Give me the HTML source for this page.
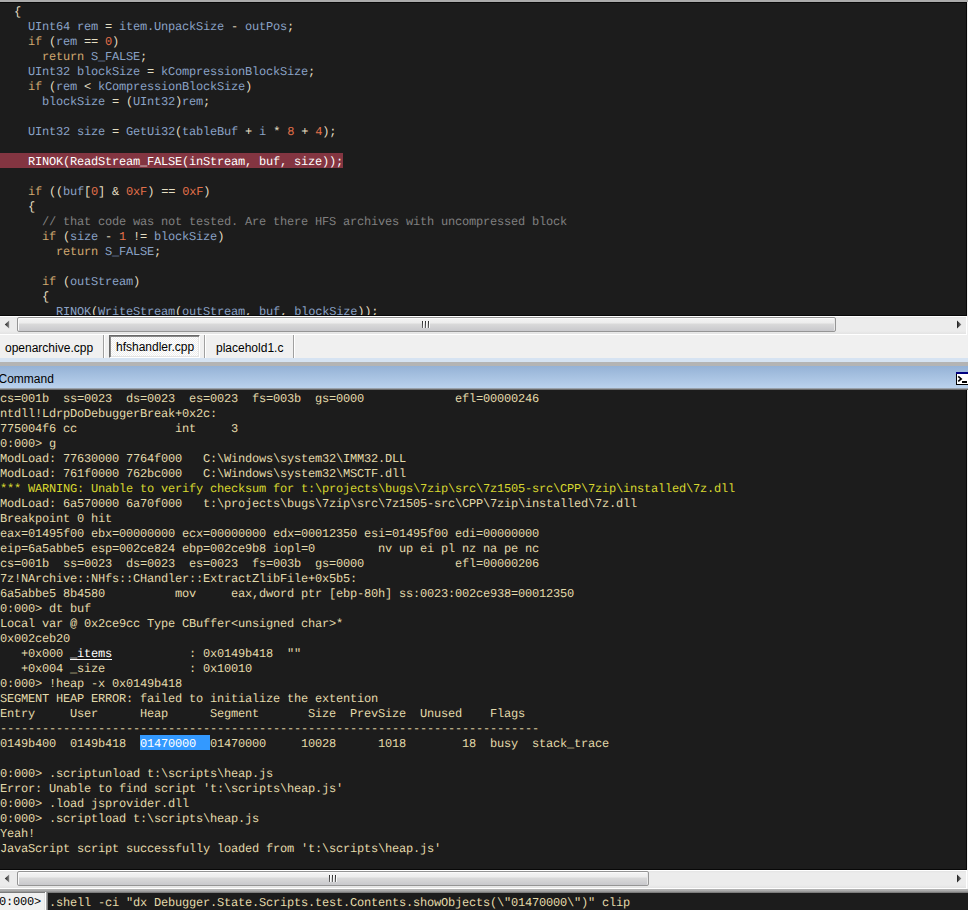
<!DOCTYPE html>
<html><head><meta charset="utf-8">
<style>
*{margin:0;padding:0;box-sizing:border-box}
html,body{width:968px;height:910px;overflow:hidden;background:#f0f0f0}
body{position:relative;font-family:"Liberation Sans",sans-serif}
.abs{position:absolute}
pre{font-family:"Liberation Mono",monospace;font-size:12px;letter-spacing:-0.2px;line-height:15px;white-space:pre;position:absolute;text-rendering:geometricPrecision}
#topbar{left:0;top:0;width:968px;height:2px;background:#ababab}
#editor{left:0;top:2px;width:967px;height:314px;background:#1c1c1c;border:1px solid #080808;border-left:none;overflow:hidden}
#code{left:0;top:2px;color:#e4dec2}
.k{color:#d0a870}.i{color:#8aa2c6}.n{color:#e2704a}.c{color:#808080}
#hlbar{left:0;top:150px;width:343px;height:15px;background:#833541}
.hl{color:#fff}
#cmd{left:0;top:390px;width:967px;height:480px;background:#1c1c1c;border-right:1px solid #080808;border-bottom:1px solid #080808;overflow:hidden}
#out{left:0;top:2px;color:#e3daaa}
.y{color:#d8d830}
.w{color:#fff;text-decoration:underline;text-underline-offset:2px;text-decoration-thickness:1px}
.sel{color:#fff}
#selbar{left:140px;top:345px;width:70px;height:15px;background:#3399ff}
.hs{height:19px;width:967px;background:#fff}
.trk{left:0;top:1px;width:966px;height:17px;background:linear-gradient(#e4e4e4,#ececec 2px,#ececec 14px,#e3e3e3 17px)}
.thumb{top:1px;height:15px;border:1px solid #959595;border-radius:2px;background:linear-gradient(#f4f4f4 0,#ededed 5px,#dadada 6px,#c8c8cc 13px);box-shadow:inset 1px 1px 0 #fafafa,inset -1px 0 0 #e8e8e8}
.grip{top:4px;width:1px;height:7px;background:linear-gradient(#2a2a2a,#6a6a6a);box-shadow:1px 0 0 #fafafa}
.arrL{left:4px;top:4px;width:7px;height:9px}
.arrR{left:956px;top:4px;width:7px;height:9px}
#tabs{left:0;top:335px;width:968px;height:23px;background:#f0f0f0}
.tab{top:2px;font-size:12px;line-height:23px;color:#000;white-space:pre}
.sep{top:0;width:2px;height:23px;border-left:1px solid #a0a0a0;border-right:1px solid #fff}
#seltab{left:109px;top:0;width:91px;height:23px;border:1px solid;border-color:#696969 #fff #fff #696969;box-shadow:inset 1px 1px 0 #8a8a8a,inset -1px -1px 0 #e3e3e3;background:repeating-conic-gradient(#fff 0 25%,#ededed 0 50%) 0 0/2px 2px}
#bl{left:0;top:358px;width:968px;height:4px;background:#d6e3f2}
#gr{left:0;top:362px;width:968px;height:4px;background:#b4b4b4}
#hdr{left:0;top:366px;width:968px;height:24px;background:linear-gradient(#95b2d6 0,#b9d1ec 21.5px,#8a8a8a 23px,#505050 24px)}
#hdrtxt{left:-1.5px;top:2px;font-size:12px;line-height:22px;color:#000}
#prompt{left:0;top:889px;width:968px;height:21px;background:linear-gradient(#b6b6b6 0,#a8a8a8 2px,#6e6e6e 4px)}
#pbox{left:0;top:893px;width:44px;height:17px;background:#f0f0f0;border-right:1px solid #e4e4e4;width:45px}
#pwl{left:45px;top:892px;width:1px;height:18px;background:#fff}
#pgl{left:46px;top:892px;width:2px;height:18px;background:linear-gradient(90deg,#b8b8b8,#6a6a6a)}
#inp{left:48px;top:893px;width:920px;height:17px;background:#1c1c1c}
</style></head><body>
<div id="topbar" class="abs"></div>
<div id="editor" class="abs">
<div id="hlbar" class="abs"></div>
<pre id="code">  {
    <span class="i">UInt64 rem</span> = <span class="i">item.UnpackSize</span> - <span class="i">outPos</span>;
    <span class="k">if</span> (<span class="i">rem</span> == <span class="n">0</span>)
      <span class="k">return</span> <span class="i">S_FALSE</span>;
    <span class="i">UInt32 blockSize</span> = <span class="i">kCompressionBlockSize</span>;
    <span class="k">if</span> (<span class="i">rem</span> &lt; <span class="i">kCompressionBlockSize</span>)
      <span class="i">blockSize</span> = (<span class="i">UInt32</span>)<span class="i">rem</span>;

    <span class="i">UInt32 size</span> = <span class="i">GetUi32</span>(<span class="i">tableBuf</span> + <span class="i">i</span> * <span class="n">8</span> + <span class="n">4</span>);

<span class="hl">    RINOK(ReadStream_FALSE(inStream, buf, size));</span>

    <span class="k">if</span> ((<span class="i">buf</span>[<span class="n">0</span>] &amp; <span class="n">0xF</span>) == <span class="n">0xF</span>)
    {
      <span class="c">// that code was not tested. Are there HFS archives with uncompressed block</span>
      <span class="k">if</span> (<span class="i">size</span> - <span class="n">1</span> != <span class="i">blockSize</span>)
        <span class="k">return</span> <span class="i">S_FALSE</span>;

      <span class="k">if</span> (<span class="i">outStream</span>)
      {
        <span class="i">RINOK</span>(<span class="i">WriteStream</span>(<span class="i">outStream</span>, <span class="i">buf</span>, <span class="i">blockSize</span>));
</pre>
</div>
<div id="cmd" class="abs">
<div id="selbar" class="abs"></div>
<pre id="out">cs=001b  ss=0023  ds=0023  es=0023  fs=003b  gs=0000             efl=00000246
ntdll!LdrpDoDebuggerBreak+0x2c:
775004f6 cc              int     3
0:000&gt; g
ModLoad: 77630000 7764f000   C:\Windows\system32\IMM32.DLL
ModLoad: 761f0000 762bc000   C:\Windows\system32\MSCTF.dll
<span class="y">*** WARNING: Unable to verify checksum for t:\projects\bugs\7zip\src\7z1505-src\CPP\7zip\installed\7z.dll</span>
ModLoad: 6a570000 6a70f000   t:\projects\bugs\7zip\src\7z1505-src\CPP\7zip\installed\7z.dll
Breakpoint 0 hit
eax=01495f00 ebx=00000000 ecx=00000000 edx=00012350 esi=01495f00 edi=00000000
eip=6a5abbe5 esp=002ce824 ebp=002ce9b8 iopl=0         nv up ei pl nz na pe nc
cs=001b  ss=0023  ds=0023  es=0023  fs=003b  gs=0000             efl=00000206
7z!NArchive::NHfs::CHandler::ExtractZlibFile+0x5b5:
6a5abbe5 8b4580          mov     eax,dword ptr [ebp-80h] ss:0023:002ce938=00012350
0:000&gt; dt buf
Local var @ 0x2ce9cc Type CBuffer&lt;unsigned char&gt;*
0x002ceb20
   +0x000 <span class="w">_items</span>           : 0x0149b418  ""
   +0x004 _size            : 0x10010
0:000&gt; !heap -x 0x0149b418
SEGMENT HEAP ERROR: failed to initialize the extention
Entry     User      Heap      Segment       Size  PrevSize  Unused    Flags
-----------------------------------------------------------------------------
0149b400  0149b418  <span class="sel">01470000  </span>01470000     10028      1018        18  busy  stack_trace

0:000&gt; .scriptunload t:\scripts\heap.js
Error: Unable to find script 't:\scripts\heap.js'
0:000&gt; .load jsprovider.dll
0:000&gt; .scriptload t:\scripts\heap.js
Yeah!
JavaScript script successfully loaded from 't:\scripts\heap.js'
</pre>
</div>

<div class="abs hs" style="left:0;top:316px">
  <div class="abs trk"></div>
  <svg class="abs arrL" viewBox="0 0 7 9"><defs><linearGradient id="ga" x1="0" x2="1"><stop offset="0" stop-color="#1a1a1a"/><stop offset="1" stop-color="#8a8a8a"/></linearGradient></defs><polygon points="5.2,0.6 0.8,4.5 5.2,8.4" fill="url(#ga)"/></svg>
  <div class="abs thumb" style="left:17px;width:819px"></div>
  <div class="abs grip" style="left:422px;top:5px"></div>
  <div class="abs grip" style="left:425px;top:5px"></div>
  <div class="abs grip" style="left:428px;top:5px"></div>
  <svg class="abs arrR" viewBox="0 0 7 9"><defs><linearGradient id="gb" x1="0" x2="1"><stop offset="0" stop-color="#1a1a1a"/><stop offset="1" stop-color="#8a8a8a"/></linearGradient></defs><polygon points="1,0.6 5.4,4.5 1,8.4" fill="url(#gb)"/></svg>
</div>
<div id="tabs" class="abs">
  <div class="abs tab" style="left:5px">openarchive.cpp</div>
  <div class="abs sep" style="left:103px"></div>
  <div id="seltab" class="abs"></div>
  <div class="abs tab" style="left:116px;top:1px">hfshandler.cpp</div>
  <div class="abs sep" style="left:204px"></div>
  <div class="abs tab" style="left:216px">placehold1.c</div>
  <div class="abs sep" style="left:293px"></div>
</div>
<div id="bl" class="abs"></div>
<div id="gr" class="abs"></div>
<div id="hdr" class="abs"><div id="hdrtxt" class="abs">Command</div>
  <svg class="abs" style="left:956px;top:6px" width="12" height="13" viewBox="0 0 12 13">
    <rect x="0.5" y="0.5" width="12" height="12" fill="#fff" stroke="#000"/>
    <rect x="0" y="0" width="12" height="2" fill="#000080"/>
    <path d="M2.2 4.4 L5.2 6.9 L2.2 9.4" fill="none" stroke="#000" stroke-width="1.6"/>
    <rect x="6" y="9" width="5" height="2" fill="#000"/>
  </svg>
</div>
<div class="abs hs" style="left:0;top:870px">
  <div class="abs trk"></div>
  <svg class="abs arrL" viewBox="0 0 7 9"><defs><linearGradient id="ga" x1="0" x2="1"><stop offset="0" stop-color="#1a1a1a"/><stop offset="1" stop-color="#8a8a8a"/></linearGradient></defs><polygon points="5.2,0.6 0.8,4.5 5.2,8.4" fill="url(#ga)"/></svg>
  <div class="abs thumb" style="left:17px;width:632px"></div>
  <div class="abs grip" style="left:329px;top:5px"></div>
  <div class="abs grip" style="left:332px;top:5px"></div>
  <div class="abs grip" style="left:335px;top:5px"></div>
  <svg class="abs arrR" viewBox="0 0 7 9"><defs><linearGradient id="gb" x1="0" x2="1"><stop offset="0" stop-color="#1a1a1a"/><stop offset="1" stop-color="#8a8a8a"/></linearGradient></defs><polygon points="1,0.6 5.4,4.5 1,8.4" fill="url(#gb)"/></svg>
</div>
<div id="prompt" class="abs"></div>
<div id="pbox" class="abs"><pre style="left:-1px;top:2px;color:#000">0:000&gt;</pre></div>
<div id="pwl" class="abs"></div>
<div id="pgl" class="abs"></div>
<div id="inp" class="abs"><pre style="left:1px;top:3px;color:#e3daaa">.shell -ci "dx Debugger.State.Scripts.test.Contents.showObjects(\"01470000\")" clip</pre></div>
</body></html>
